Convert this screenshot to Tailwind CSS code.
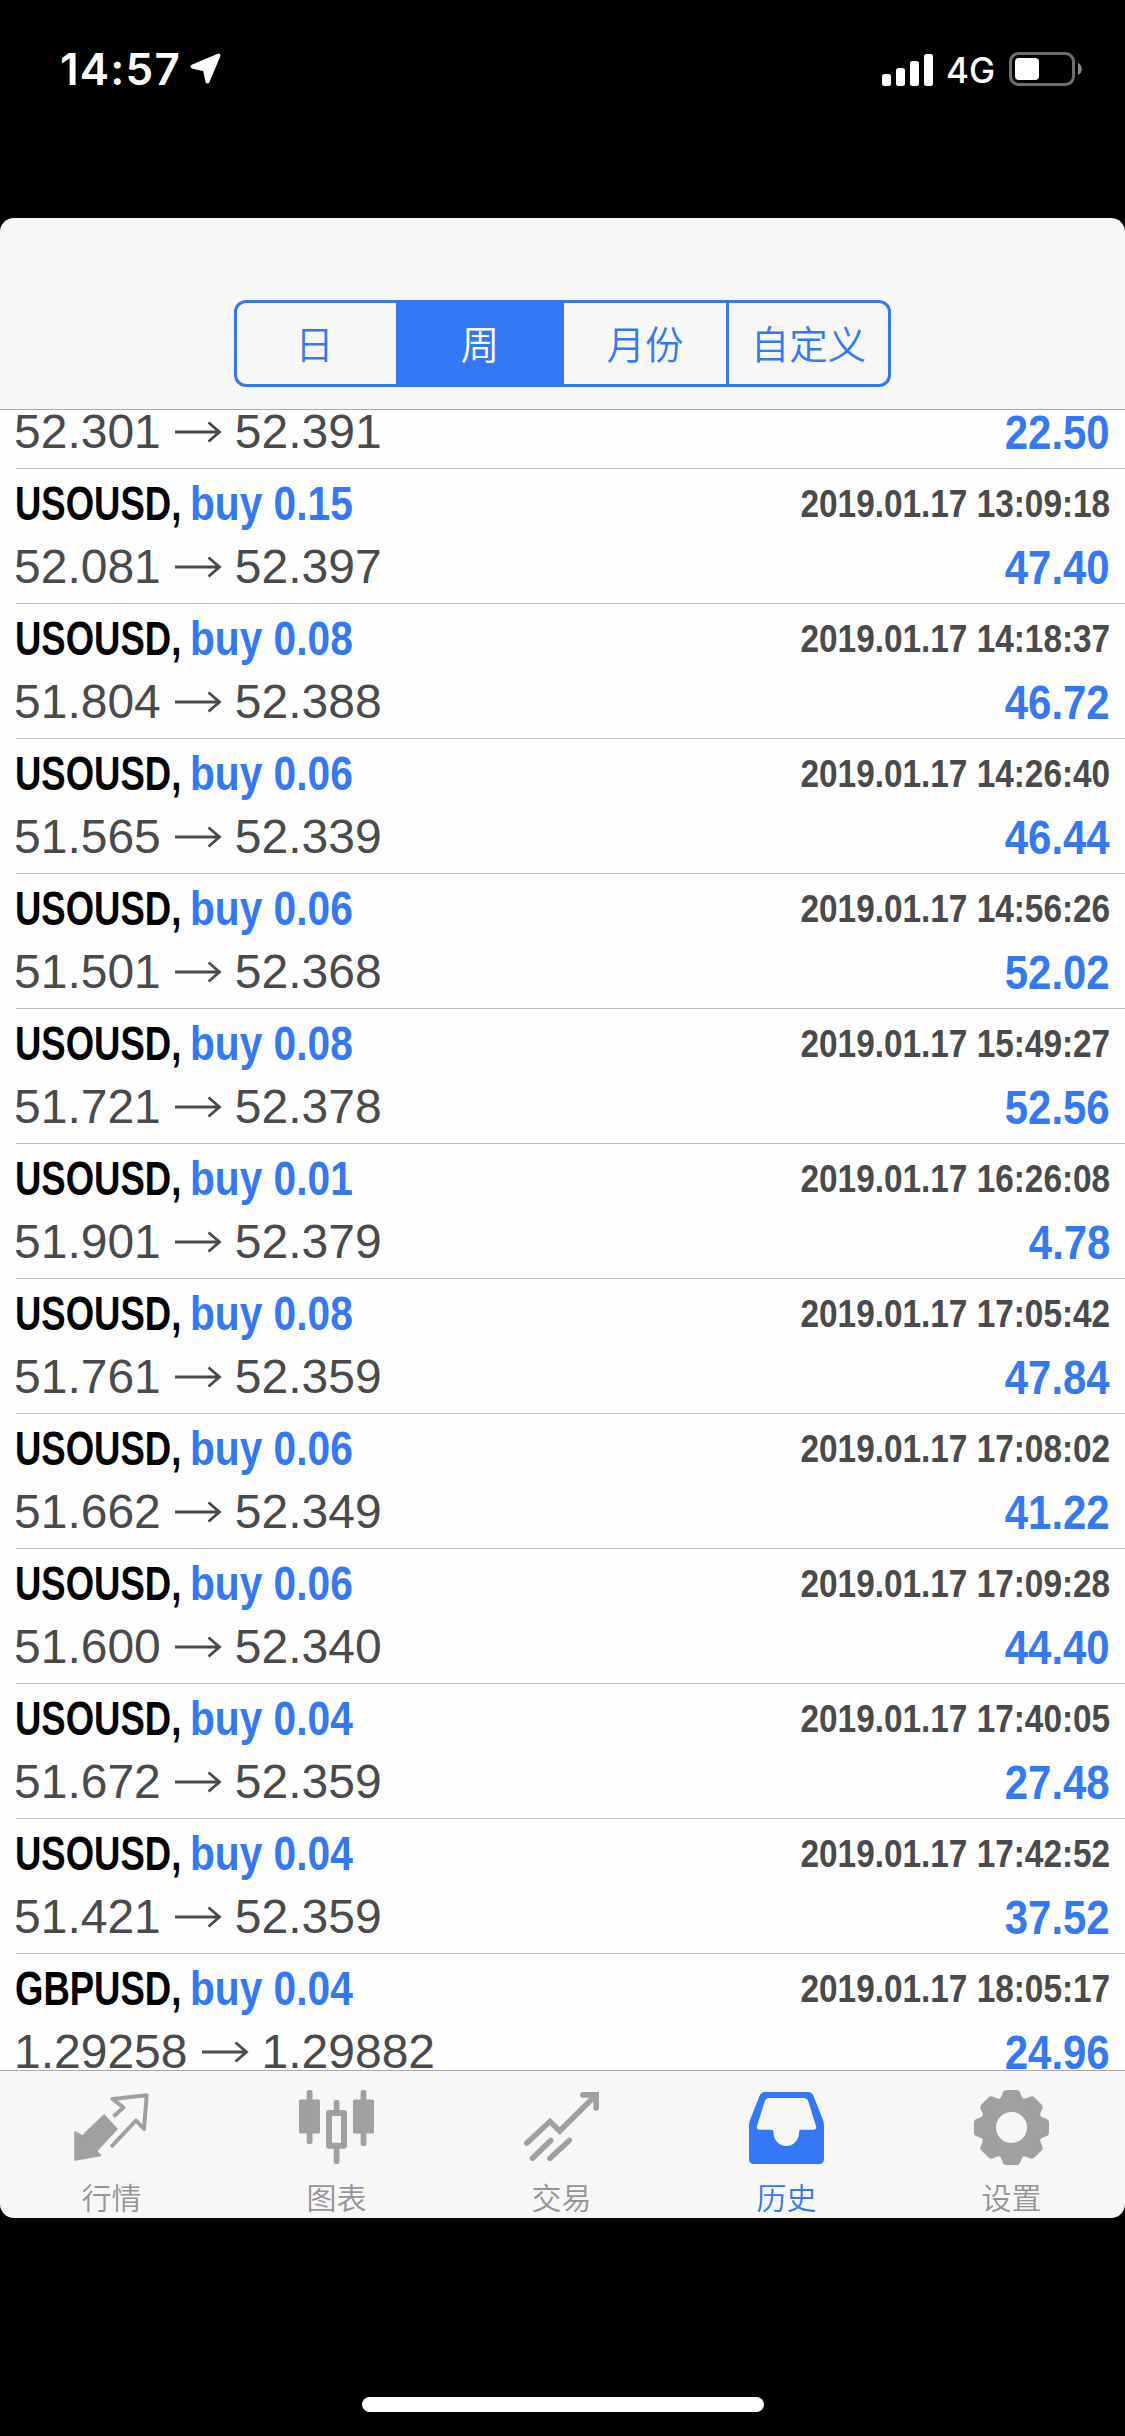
<!DOCTYPE html>
<html lang="zh-CN">
<head>
<meta charset="utf-8">
<title>历史</title>
<script src="https://cdn.jsdelivr.net/npm/@tailwindcss/browser@4"></script>
</head>
<body class="bg-black">
<div class="flex h-[2436px] w-[1125px] flex-col overflow-hidden bg-black font-['Liberation_Sans','Noto_Sans_CJK_SC',sans-serif]">

  <!-- status bar -->
  <header class="flex h-[218px] shrink-0 items-start justify-between pt-[42px] pr-[42px] pl-[60px] text-white">
    <div class="flex h-[54px] items-center">
      <span class="w-[130px] font-['Inter',sans-serif] text-[44px] leading-[54px] font-semibold tracking-[1.2px] whitespace-nowrap">14:57</span>
      <svg class="h-[32px] w-[32px]" viewBox="0 0 32 32"><path d="M2.500 13.500 28.500 2.500 17.500 28.500 15 16.500Z" fill="#fff" stroke="#fff" stroke-width="4" stroke-linejoin="round"/></svg>
    </div>
    <div class="flex h-[54px] items-center">
      <svg class="h-[34px] w-[54px]" viewBox="0 0 54 34" fill="#fff"><rect x="1" y="22" width="9" height="12" rx="2.500"/><rect x="15" y="16" width="9" height="18" rx="2.500"/><rect x="29" y="9" width="9" height="25" rx="2.500"/><rect x="43" y="2" width="9" height="32" rx="2.500"/></svg>
      <span class="ml-[11px] w-[63px] pt-[2px] font-['Inter',sans-serif] text-[35px] leading-[52px] font-medium">4G</span>
      <svg class="h-[34px] w-[74px]" viewBox="0 0 74 34"><rect x="1.500" y="1.500" width="63" height="31" rx="8" fill="none" stroke="#6e6e6e" stroke-width="3"/><rect x="6" y="6" width="24" height="22" rx="4" fill="#fff"/><path d="M69 11c5 2 5 10 0 12Z" fill="#8a8a8a"/></svg>
    </div>
  </header>

  <main class="flex h-[2000px] shrink-0 flex-col overflow-hidden rounded-[14px] bg-[#f7f7f7]">
    <!-- period selector -->
    <div class="flex h-[192px] shrink-0 items-start border-b border-[#a9a9a9] pt-[82px] pl-[234px]">
      <div class="flex h-[87px] w-[657px] overflow-hidden rounded-[12px] border-[3px] border-[#3478f6] text-[38.500px] font-[350] text-[#3478f6]">
        <div class="flex w-[159px] items-center justify-center pt-[4px] pr-[4px]">日</div>
        <div class="flex w-[168px] items-center justify-center bg-[#3478f6] pt-[4px] text-white">周</div>
        <div class="flex w-[165px] items-center justify-center border-r-[3px] border-[#3478f6] pt-[4px]">月份</div>
        <div class="flex flex-1 items-center justify-center pt-[4px]">自定义</div>
      </div>
    </div>

    <!-- closed deals -->
    <div id="deals" class="h-[1660px] shrink-0 overflow-hidden bg-[#fefefe] pl-[16px]"></div>

    <!-- tab bar -->
    <nav class="grid flex-1 grid-cols-5 border-t border-[#a9a9a9] text-[30px] leading-[36px] font-[350] text-[#949494]">
      <div class="flex flex-col items-center pt-[19px] pr-[2px]">
        <svg class="h-[75px] w-[75px]" viewBox="0 0 75 75"><path d="M1 42 8.300 46 30 25 43 39 22.500 61 26.500 65.500 1 70Z" fill="#a0a0a0" stroke="#a0a0a0" stroke-width="1.500" stroke-linejoin="round"/><path d="M39.500 26.500 49.500 17.500 38.500 9 72.700 5.300 70 39 62 30.500 37 57" fill="none" stroke="#a0a0a0" stroke-width="4" stroke-linejoin="round"/></svg>
        <span class="mt-[16px]">行情</span>
      </div>
      <div class="flex flex-col items-center pt-[19px] pr-[2px]">
        <svg class="h-[75px] w-[75px]" viewBox="0 0 75 75" fill="#a0a0a0"><rect y="9.500" width="21" height="34" rx="1.500"/><rect x="7.700" width="5.800" height="54" rx="2"/><rect x="54" y="9.500" width="21" height="34" rx="1.500"/><rect x="61.600" width="5.800" height="56" rx="2"/><rect x="34.700" y="10" width="5.800" height="12" rx="2"/><rect x="34.700" y="56" width="5.800" height="18" rx="2"/><rect x="30" y="23" width="15" height="32.700" fill="none" stroke="#a0a0a0" stroke-width="6" stroke-linejoin="round"/></svg>
        <span class="mt-[16px]">图表</span>
      </div>
      <div class="flex flex-col items-center pt-[19px] pr-[2px]">
        <svg class="h-[75px] w-[75px]" viewBox="0 0 75 75" fill="none" stroke="#a0a0a0" stroke-width="5.600" stroke-linecap="round"><path d="M2.800 53 26 31.500 35.700 41 72 5M59 4.900H72.200V18"/><path d="M8.500 68.300 26.700 50.500M26 68.300 45.300 50.500"/></svg>
        <span class="mt-[16px]">交易</span>
      </div>
      <div class="flex flex-col items-center pt-[19px] pr-[2px] text-[#3478f6]">
        <svg class="h-[75px] w-[75px]" viewBox="0 0 75 75"><path fill="#3478f6" fill-rule="evenodd" d="M16 2H59Q63 2 64.500 6L74 30Q75 33 75 36V69Q75 74 70 74H5Q0 74 0 69V36Q0 33 1 30L10.500 6Q12 2 16 2ZM20 8Q17 8 16 10.500L8 36Q7 39.700 10 39.700H23Q24.500 39.700 24.500 42.500C24.500 50 30 56 37.300 56S50 50 50 42.500Q50 39.700 51.500 39.700H65Q68 39.700 67 36L59 10.500Q58 8 55 8Z"/></svg>
        <span class="mt-[16px]">历史</span>
      </div>
      <div class="flex flex-col items-center pt-[19px] pr-[2px]">
        <svg class="h-[75px] w-[75px]" viewBox="-37.500 -37.500 75 75" fill="#a0a0a0"><defs><path id="tooth" d="M-14 -27Q-10 -29.500 -9 -34Q-8 -37.500 -5 -37.500H5Q8 -37.500 9 -34Q10 -29.500 14 -27Z"/></defs><circle r="23" fill="none" stroke="#a0a0a0" stroke-width="15"/><use href="#tooth"/><use href="#tooth" transform="rotate(45)"/><use href="#tooth" transform="rotate(90)"/><use href="#tooth" transform="rotate(135)"/><use href="#tooth" transform="rotate(180)"/><use href="#tooth" transform="rotate(225)"/><use href="#tooth" transform="rotate(270)"/><use href="#tooth" transform="rotate(315)"/></svg>
        <span class="mt-[16px]">设置</span>
      </div>
    </nav>
  </main>

  <!-- home indicator -->
  <div class="mt-[179px] ml-[362px] h-[15px] w-[402px] shrink-0 rounded-full bg-white"></div>
</div>

<script>
const deals = [
  ['', '', '', '52.301', '52.391', '22.50'],
  ['USOUSD', '0.15', '13:09:18', '52.081', '52.397', '47.40'],
  ['USOUSD', '0.08', '14:18:37', '51.804', '52.388', '46.72'],
  ['USOUSD', '0.06', '14:26:40', '51.565', '52.339', '46.44'],
  ['USOUSD', '0.06', '14:56:26', '51.501', '52.368', '52.02'],
  ['USOUSD', '0.08', '15:49:27', '51.721', '52.378', '52.56'],
  ['USOUSD', '0.01', '16:26:08', '51.901', '52.379', '4.78'],
  ['USOUSD', '0.08', '17:05:42', '51.761', '52.359', '47.84'],
  ['USOUSD', '0.06', '17:08:02', '51.662', '52.349', '41.22'],
  ['USOUSD', '0.06', '17:09:28', '51.600', '52.340', '44.40'],
  ['USOUSD', '0.04', '17:40:05', '51.672', '52.359', '27.48'],
  ['USOUSD', '0.04', '17:42:52', '51.421', '52.359', '37.52'],
  ['GBPUSD', '0.04', '18:05:17', '1.29258', '1.29882', '24.96'],
];
const priceLine = (open, close, profit) => `
  <div class="-ml-[2px] flex h-[63px] items-center justify-between pt-[1px] pr-[15px] text-[48px] leading-[62px]">
    <div class="flex items-center text-[#4a4a4a]">
      <span>${open}</span>
      <svg class="mx-[13px] h-[24px] w-[48px]" viewBox="0 0 48 24" fill="none" stroke="#4a4a4a" stroke-width="2.800"><path d="M1 12H45M34.500 2.500 45.500 12 34.500 21.500"/></svg>
      <span>${close}</span>
    </div>
    <span class="origin-right scale-x-[0.855] text-[49px] font-bold text-[#3478f6]">${profit}</span>
  </div>`;
const titleLine = (symbol, volume, time) => `
  <div class="-ml-[1px] flex h-[63px] items-center justify-between pr-[15px] text-[49px] leading-[63px] font-bold whitespace-nowrap">
    <div class="flex">
      <span class="w-[175px]"><span class="inline-block origin-left scale-x-[0.745] text-black">${symbol},</span></span>
      <span class="origin-left scale-x-[0.83] text-[#3478f6]">buy ${volume}</span>
    </div>
    <span class="origin-right scale-x-[0.855] text-[39px] text-[#4a4a4a]">2019.01.17 ${time}</span>
  </div>`;
document.getElementById('deals').innerHTML = deals.map(([symbol, volume, time, open, close, profit]) =>
  symbol
    ? `<div class="h-[135px] border-b border-[#bcbcbc] pt-[3px]">${titleLine(symbol, volume, time)}${priceLine(open, close, profit)}</div>`
    : `<div class="-mt-[10px] h-[69px] border-b border-[#bcbcbc]">${priceLine(open, close, profit)}</div>`
).join('');
</script>
</body>
</html>
